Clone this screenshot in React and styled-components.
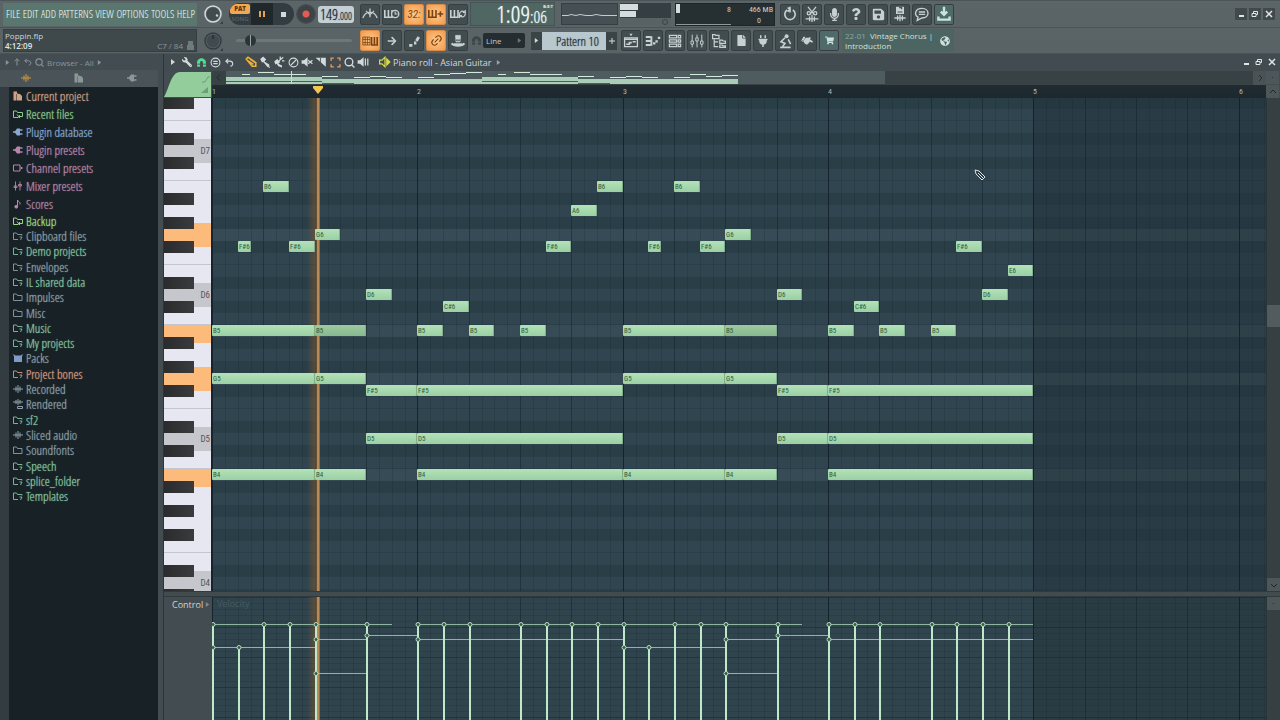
import React from 'react';
import styled, { createGlobalStyle } from 'styled-components';
import {
  FaSave, FaQuestion, FaMicrophone, FaArrowRight, FaShoppingCart, FaGlobeAmericas, FaWrench,
  FaMagnet, FaFile, FaHandPointRight, FaPlug,
} from 'react-icons/fa';
import { Link2 } from 'lucide-react';

const narrow = '"Open Sans Condensed Light", "Open Sans Condensed", "Roboto Condensed", sans-serif';
const compact = '"Roboto Condensed", Roboto, sans-serif';
const human = '"Open Sans", Lato, sans-serif';

const Global = createGlobalStyle`
  *, *::before, *::after { box-sizing: border-box; }
  body { margin: 0; background: #434c50; overflow: hidden; }
  button, select, input { font: inherit; color: inherit; margin: 0; padding: 0; border: 0; background: none; }
  ul { list-style: none; margin: 0; padding: 0; }
  svg { display: block; flex: none; }
`;

const Page = styled.div`
  display: flex;
  flex-direction: column;
  height: 100vh;
  color: #cdd5d8;
  font-family: ${human};
  font-size: 9px;
`;

/* ---------- header ---------- */
const Header = styled.header`
  background: linear-gradient(#5b6568, #596366);
  border-top: 1px solid #4b5558;
`;
const HeaderRow = styled.div`
  display: flex;
  align-items: center;
  height: ${p => p.$h}px;
  padding: 0 5px 0 3px;
  border-bottom: 1px solid #4a5457;
`;
const Menu = styled.nav`
  display: flex;
  justify-content: space-between;
  align-items: center;
  width: 194px;
  height: 23px;
  padding: 0 2px 2px 3px;
  background: #5a776f;
  font-family: ${narrow};
  font-size: 11px;
  color: #f4fbf7;
  text-shadow: 0 0 1px #e6f2ec;
`;
const Info = styled.div`
  display: flex;
  flex-direction: column;
  justify-content: center;
  width: 194px;
  height: 23px;
  padding: 0 2px 0 1px;
  background: #3f494c;
  border: 1px solid #353e41;
  font-size: 8px;
  line-height: 10px;
  span { display: flex; }
  em { margin-left: auto; padding-right: 4px; font-style: normal; color: #8b979b; }
  b { font-weight: 600; color: #e3e9eb; }
`;
const KnobCell = styled.div`
  display: flex;
  justify-content: center;
  width: 26px;
  margin-left: 3px;
`;
const Transport = styled.div`
  display: flex;
  width: 65px;
  height: 22px;
  margin-left: 3px;
  border-radius: 11px;
  overflow: hidden;
  background: #333c40;
`;
const ModeButton = styled.button`
  display: flex;
  flex-direction: column;
  width: 22px;
  font-size: 6px;
  font-weight: 600;
  line-height: 10px;
  text-align: center;
  color: #59646a;
  b { margin: 1px 1px 0; background: #f2a850; color: #5c340c; border-radius: 6px 2px 2px 2px; }
`;
const PlayButton = styled.button`
  display: grid;
  place-items: center;
  flex: 1;
  background: ${p => (p.$dark ? '#20282b' : 'transparent')};
`;
const RecButton = styled.button`
  width: 18px;
  height: 18px;
  margin-left: 3px;
  border-radius: 50%;
  background: radial-gradient(circle, #e65a55 0 3px, #3c4245 4px);
  box-shadow: 0 0 0 1px #444e51;
`;
const Tempo = styled.div`
  width: 36px;
  height: 17px;
  margin-left: 3px;
  border-radius: 3px;
  background: #c3cfd4;
  color: #1d262d;
  font-family: ${narrow};
  font-size: 15px;
  line-height: 16px;
  text-align: center;
  text-shadow: 0 0 1px #3a464e;
  small { font-size: 10px; }
`;
const Group = styled.div`
  display: flex;
  gap: 2px;
  margin-left: ${p => p.$ml}px;
`;
const Tool = styled.button`
  display: grid;
  place-items: center;
  width: 20px;
  height: 21px;
  border-radius: 2px;
  border: 1px solid ${p => (p.$on ? '#d98d48' : '#353f43')};
  background: ${p => (p.$on ? 'radial-gradient(#ffc98a, #f29a4c)' : p.$teal ? '#4f6a68' : '#424d50')};
  color: ${p => (p.$on ? '#7a4212' : p.$teal ? '#c8e4dc' : '#c8d0d3')};
  font-family: ${compact};
  font-size: 11px;
  font-style: italic;
`;
const Clock = styled.div`
  display: flex;
  align-items: flex-end;
  justify-content: flex-end;
  width: 85px;
  height: 24px;
  margin-left: 2px;
  padding-right: 1px;
  background: #4f6663;
  border: 1px solid #455557;
  color: #eef7f5;
  font-family: ${narrow};
  font-size: 24px;
  line-height: 23px;
  text-shadow: 0 0 1px #dcebe8;
`;
const ClockTail = styled.span`
  display: flex;
  flex-direction: column;
  width: 23px;
  small { font-size: 17px; line-height: 16px; }
  abbr { font: 700 4px/5px Roboto, sans-serif; text-align: right; text-shadow: none; }
`;
const Scope = styled.div`
  width: 57px;
  height: 22px;
  margin-left: 6px;
  background: #465054;
  border: 1px solid #353e42;
`;
const Peaks = styled.div`
  width: 51px;
  height: 22px;
  margin-left: 2px;
  background: linear-gradient(#353e42 0 15px, #586265 15px);
`;
const Cpu = styled.div`
  display: grid;
  grid-template-columns: 55px 1fr;
  grid-template-rows: 11px 10px;
  width: 100px;
  height: 23px;
  margin-left: 4px;
  padding-right: 1px;
  background: #263033;
  border: 1px solid #1d2528;
  color: #c9d2d4;
  font-family: ${compact};
  font-size: 8px;
  line-height: 11px;
  text-align: right;
  span:first-child { border-left: 4px solid #d5dcde; height: 9px; }
  span:nth-child(3) { border-bottom: 1px solid #8d989b; height: 10px; }
  span:nth-child(4) { padding-right: 12px; }
`;
const Spacer = styled.div`flex: 1;`;
const Gap = styled.div`width: ${p => p.$w}px;`;
const WinButton = styled.button`
  display: grid;
  place-items: center;
  width: ${p => p.$w || 12}px;
  height: 12px;
  background: ${p => (p.$flat ? 'none' : '#41494d')};
  color: #dfe5e7;
`;
const PitchSlider = styled.input`
  appearance: none;
  width: 116px;
  height: 3px;
  margin-left: 10px;
  background: #6d777a;
  border-radius: 2px;
  &::-webkit-slider-thumb {
    appearance: none;
    width: 11px;
    height: 11px;
    border-radius: 50%;
    background: linear-gradient(90deg, #2c3437 0 5px, #9aa4a7 5px 6px, #2c3437 6px);
  }
`;
const SnapBox = styled.label`
  display: grid;
  grid-template-columns: 42px;
  align-items: center;
  height: 15px;
  margin-left: 2px;
  background: #262d30;
  color: #c3cbcd;
  border-radius: 2px;
  font-size: 8px;
  & > * { grid-area: 1 / 1; }
  & > svg { justify-self: end; margin-right: 3px; color: #6c7579; pointer-events: none; }
`;
const Snap = styled.select`
  appearance: none;
  padding-left: 3px;
`;
const SnapIcon = styled.span`
  margin-left: 4px;
  color: #3c4548;
`;
const Pattern = styled.div`
  display: flex;
  align-items: center;
  height: 18px;
  margin-left: 6px;
`;
const PatternStep = styled.button`
  display: grid;
  place-items: center;
  width: 11px;
  height: 18px;
  background: #3a4447;
  color: #d3dadc;
`;
const PatternName = styled.button`
  width: 64px;
  height: 18px;
  padding-right: 7px;
  background: #b9c8cf;
  color: #1f2b33;
  font-family: ${narrow};
  font-size: 13px;
  line-height: 16px;
  text-align: right;
  text-shadow: 0 0 1px #36424a;
`;
const News = styled.a`
  display: flex;
  align-items: center;
  justify-content: space-between;
  width: 112px;
  height: 23px;
  margin-left: 3px;
  padding: 0 4px 0 3px;
  background: #4c6563;
  color: #cfe0dd;
  font-size: 8px;
  line-height: 10px;
  text-decoration: none;
  em { padding-right: 2px; font-style: normal; color: #8ea6a4; }
`;

/* ---------- body ---------- */
const Body = styled.div`
  display: flex;
  flex: 1;
  min-height: 0;
`;
const Sidebar = styled.aside`
  display: flex;
  flex-direction: column;
  width: 158px;
  background: #333c40;
`;
const SideTitle = styled.div`
  display: flex;
  align-items: center;
  gap: 3px;
  height: 16px;
  padding-left: 5px;
  background: #434c50;
  color: #8a9599;
  font-size: 8px;
`;
const SideTabs = styled.div`
  display: flex;
  height: 17px;
  padding-bottom: 2px;
  background: #4a5458;
`;
const SideTab = styled.button`
  flex: 1;
  display: grid;
  place-items: center;
  color: ${p => (p.$on ? '#c9963e' : '#8c979a')};
`;
const Tree = styled.nav`
  flex: 1;
  margin-left: 9px;
  background: #182226;
  font-family: ${narrow};
  font-size: 13px;
  line-height: 14px;
`;
const TreeList = styled.ul`
  display: grid;
  grid-auto-rows: 1fr;
  height: ${p => p.$h}px;
`;
const TreeItem = styled.li`
  display: flex;
  align-items: center;
  gap: 3px;
  padding-left: 4px;
  color: ${p => p.$c};
  a { color: inherit; text-decoration: none; text-shadow: 0 0 1px currentColor; }
`;
const Divider = styled.div`
  width: 6px;
  background: #434c50;
  border-right: 1px solid #2c3538;
`;
const Roll = styled.main`
  display: flex;
  flex-direction: column;
  flex: 1;
  min-width: 0;
  background: #434c50;
`;
const RollTitle = styled.div`
  display: flex;
  align-items: center;
  height: 17px;
  padding: 0 0 1px 2px;
  background: #424b4f;
  color: #d3dadc;
`;
const RollTool = styled.button`
  display: grid;
  place-items: center;
  width: 14px;
  height: 14px;
  color: ${p => p.$c || '#d3dadc'};
`;
const RollName = styled.span`margin-left: 1px;`;
const Split = styled.div`
  display: grid;
  grid-template-columns: 48px minmax(0, 1fr) 14px;
  flex: ${p => p.$flex};
  min-height: 0;
`;
const Corner = styled.div`
  grid-row: span 2;
`;
const MiniRow = styled.div`
  position: relative;
  height: 14px;
  overflow: hidden;
  background: #384144;
`;
const MiniMore = styled.button`
  position: absolute;
  top: 0;
  right: 0;
  width: 13px;
  height: 14px;
  background: #4a5255;
  color: #262c2f;
  display: grid;
  place-items: center;
`;
const Ruler = styled.div`
  position: relative;
  height: 13px;
  overflow: hidden;
  background: linear-gradient(#202c32, #1c282e);
  color: #a9b6ba;
  font-family: ${compact};
  font-size: 8px;
  line-height: 13px;
`;
const RulerMark = styled.span`
  position: absolute;
`;
const Marker = styled.svg`
  position: absolute;
  top: 1px;
`;
const ScrollCell = styled.div`
  display: flex;
  flex-direction: column;
  background: #363f42;
  border-left: 1px solid #2b3538;
  justify-content: space-between;
`;
const ScrollButton = styled.button`
  display: grid;
  place-items: center;
  width: 13px;
  height: 13px;
  background: #4d5659;
  color: #20272a;
`;
const ScrollThumb = styled.div`
  height: 22px;
  margin-bottom: 44px;
  background: #525c5f;
`;
const Keyboard = styled.div`
  overflow: hidden;
  border-right: 1px solid #1a2327;
`;
const Key = styled.div`
  display: flex;
  align-items: center;
  justify-content: flex-end;
  height: 12px;
  padding-right: 1px;
  color: #50565c;
  font-family: ${compact};
  font-size: 9px;
  line-height: 12px;
  background: ${p => p.$fill};
  border-bottom: ${p => (p.$edge ? '1px solid #c3c7d1' : '0')};
  &:first-child { height: 11px; }
`;
const Canvas = styled.div`
  position: relative;
  overflow: hidden;
  background: #2d414b;
`;
const Band = styled.div`
  height: 12px;
  background: ${p => p.$c};
  border-bottom: ${p => (p.$edge ? '1px solid #2a3e48' : '0')};
  &:first-child { height: 11px; }
`;
const Fill = styled.svg`
  position: absolute;
  inset: 0;
  width: 100%;
  height: 100%;
`;
const Note = styled.div`
  position: absolute;
  height: 11px;
  padding-left: 1px;
  border-radius: 1px;
  background: ${p => (p.$dim ? 'linear-gradient(#9ccaa1, #88b88f)' : 'linear-gradient(#b2e2b8, #9ccfa4)')};
  box-shadow: inset -1px 0 #7fb089;
  color: #2f5a3a;
  font-family: ${compact};
  font-size: 7px;
  line-height: 12px;
`;
const Playhead = styled.div`
  position: absolute;
  top: 0;
  bottom: 0;
  width: 13px;
  background: linear-gradient(90deg, transparent, rgba(128, 88, 46, .65) 10px, #b98a55 10px 12px, #7f6e58 12px);
`;
const CursorIcon = styled.svg`
  position: absolute;
`;
const Splitter = styled.div`
  height: 6px;
  background: #424b4e;
  border-top: 1px solid #30393c;
  border-bottom: 1px solid #30393c;
`;
const ControlLabel = styled.div`
  display: flex;
  align-items: center;
  gap: 2px;
  height: 14px;
  padding-left: 8px;
  color: #cdd5d8;
  svg { color: #7f8a8e; }
`;
const ControlName = styled.div`
  position: absolute;
  left: 5px;
  top: 1px;
  color: #485b64;
  line-height: 12px;
`;

/* ---------- musical data ---------- */
const BAR = 616 / 3;
const xOf = step => Math.round((step * BAR) / 16);
const NAMES = ['C', 'C#', 'D', 'D#', 'E', 'F', 'F#', 'G', 'G#', 'A', 'A#', 'B'];
const nameOf = p => NAMES[p % 12] + Math.floor(p / 12);
const isBlack = p => [1, 3, 6, 8, 10].includes(p % 12);
const TOP = 90;
const pitches = Array.from({ length: 60 }, (_, i) => TOP - i);
const ACTIVE = [79, 71, 67, 59];
const pitchOf = s => NAMES.indexOf(s.slice(0, -1)) + 12 * Number(s.slice(-1));

const melody = [
  ['F#6', 2, 1], ['B6', 4, 2], ['F#6', 6, 2], ['G6', 8, 2], ['D6', 12, 2], ['B5', 16, 2], ['C#6', 18, 2],
  ['B5', 20, 2], ['B5', 24, 2], ['F#6', 26, 2], ['A6', 28, 2], ['B6', 30, 2],
  ['F#6', 34, 1], ['B6', 36, 2], ['F#6', 38, 2], ['G6', 40, 2], ['D6', 44, 2], ['B5', 48, 2], ['C#6', 50, 2],
  ['B5', 52, 2], ['B5', 56, 2], ['F#6', 58, 2], ['D6', 60, 2], ['E6', 62, 2],
];
const chords = [0, 32].flatMap(o => [
  ['B5', o, 8], ['B5', o + 8, 4, true], ['G5', o, 8], ['G5', o + 8, 4], ['B4', o, 8], ['B4', o + 8, 4],
  ['F#5', o + 12, 4], ['D5', o + 12, 4], ['F#5', o + 16, 16], ['D5', o + 16, 16], ['B4', o + 16, 16],
]);
const notes = [...chords, ...melody];

const holds = [
  [0, 14, 27], [16, 46, 27], [48, 64, 27],
  ...[0, 32].flatMap(o => [[o, o + 8, 50], [o + 8, o + 12, 42], [o + 8, o + 12, 76], [o + 12, o + 16, 38], [o + 16, o + 32, 42]]),
];
const stems = [0, 4, 6, 8, 12, 16, 18, 20, 24, 26, 28, 30, 32, 36, 38, 40, 44, 48, 50, 52, 56, 58, 60, 62];
const knobs = [
  ...stems.map(s => [s, 27]),
  ...[0, 32].flatMap(o => [[o, 50], [o + 2, 50], [o + 8, 42], [o + 8, 76], [o + 12, 38], [o + 16, 42]]),
];

/* ---------- drawings ---------- */
const I = ({ children, s = 16, w = 2, vb = 20 }) => (
  <svg width={s} height={s} viewBox={`0 0 ${vb} ${vb}`} fill="none" stroke="currentColor" strokeWidth={w}>{children}</svg>
);
const keysPath = <path d="M1 5v9h9V5M5.500 5v9" strokeWidth="2" />;
const icons = {
  metro: <I><path d="M1 15c2-5 5-7 8-7h2c3 0 6 2 8 7M10 3v11" strokeWidth="1.600" /><path d="M5 6l5 5 5-5" strokeWidth="1.400" /></I>,
  wait: <I>{keysPath}<circle cx="14" cy="10" r="4.500" fill="#424d50" strokeWidth="1.600" /><path d="M14 7v3h3" strokeWidth="1.400" /></I>,
  blend: <I>{keysPath}<path d="M12 10h7M15.500 6.500v7" /></I>,
  loop: <I>{keysPath}<path d="M12 12c-1-6 5-7 6-4M19 8c1 6-5 7-6 4M16 8h3V5M15 12h-3v3" strokeWidth="1.500" /></I>,
  typing: <I w="1.500"><path d="M1 5h9v10H1zM1 8h9M1 12h9M4 5v10M7 5v10" strokeWidth="1" /><path d="M12 5v10h7V5M15.500 5v10" strokeWidth="2" /></I>,
  slide: <I><path d="M4 15.500h4M10 12.500h3M13 10l3-5" strokeWidth="3.500" /></I>,
  hat: <I><path d="M7 3h6l-.5 8h-5z" fill="currentColor" strokeWidth="1" /><path d="M2 13c3 4 13 4 16 0M5 14h10" strokeWidth="2.500" /><path d="M7 9h6" stroke="#6a7578" /></I>,
  undo: <I><path d="M6.500 5a6.500 6.500 0 1 0 7 0M10 1v7M10 4L7 2M10 4l-3 3" /></I>,
  cut: <I w="1.600"><path d="M5 1l8 10M15 1L7 11M2 16h16M7 13v6M10 11v9M13 13v6" /><circle cx="6" cy="9" r="2" /><circle cx="14" cy="9" r="2" /></I>,
  saveNew: <I><path d="M5 1h10v9H5z" fill="currentColor" stroke="none" /><path d="M7 7.500h6M9 2h3v2" stroke="#424d50" strokeWidth="1.500" /><path d="M3 15h14M7 12v6M10 11v8M13 12v6" strokeWidth="1.600" /></I>,
  chat: <I w="1.700"><path d="M10 3c10 0 10 12 0 12L4 18l1-4C0 11 1 3 10 3zM6 7.500h8M6 10.500h8" /></I>,
  dl: <I w="3"><path d="M10 1v8M6 7l4 4 4-4" /><path d="M3 13v4h14v-4" /></I>,
  playlist: <I><path d="M2 8h16v9H2zM2 8V6h16v2" strokeWidth="1.600" /><path d="M8 1h4l-2 3z" fill="currentColor" stroke="none" /><path d="M4 14h4v-2h3M12 11h4" /></I>,
  roll: <I><path d="M1 5h6M1 10h6M1 15h6M8 4v12" strokeWidth="2.400" /><path d="M10 13h3M13 10.500h3M16 6h3" strokeWidth="2.800" /></I>,
  rack: <I w="1.500"><path d="M3 3h9v3H3zM3 8.500h9v3H3zM3 14h9v3H3zM14 3h3v3h-3zM14 8.500h3v3h-3zM14 14h3v3h-3z" /></I>,
  mixer: <I w="1.200"><path d="M4 2v16M10 2v16M16 2v16" /><path d="M2.500 10h3v4h-3zM8.500 6h3v4h-3zM14.500 10h3v4h-3z" fill="#424d50" /></I>,
  browser: <I w="1.500"><path d="M2 2h3l1 1h4v4H2zM4 8v9h5M4 11h5M11 9h3l1 1h3v3h-7zM11 15h3l1 1h3v2h-7z" /></I>,
  person: <I><circle cx="12" cy="4" r="2.500" fill="currentColor" stroke="none" /><path d="M10 6L5 11l5 2-3 4M4 18h13M14 8l3 6" strokeWidth="2" /></I>,
  folder: <I s={10} w="1.800"><path d="M1 4h6l2 3h9v10H1z" /></I>,
  folderPlus: <I s={10} w="1.800"><path d="M18 9V7H9L7 4H1v13h9" /><path d="M13 12h5l-3 6" /></I>,
  recent: <I s={10} w="2"><path d="M11 17H1V4h6l2 3h10v7" /><path d="M8 11l3 4h8v-5M11 15l3-3M11 15l3 3" strokeWidth="2" /></I>,
  wave: <I s={10} w="2"><path d="M0 10h20M6 5v10M10 2v16M14 5v10" /></I>,
  rendered: <I s={10} w="2"><path d="M0 6h20M6 2v8M10 0v12M14 2v8M9 15h10v4H9z" /></I>,
  doc: <I s={10}><path d="M1 1h7v4h3v1H7v13H1z" fill="currentColor" stroke="none" /><path d="M8 6h6l4 4v9H8z" fill="currentColor" stroke="none" /></I>,
  plug: <I s={10} w="3"><path d="M0 10h5M19 6h-6M19 14h-6" /><path d="M3 10l5-7h6v14H8z" fill="currentColor" stroke="none" /></I>,
  channel: <I s={10}><path d="M1 4h13v12H1zM15 8l4 2-4 2" /></I>,
  mix: <I s={10} w="1.800"><path d="M5 1v18M14 1v18M2 10h6v3H2zM11 7h6v3h-6z" /></I>,
  score: <I s={10}><path d="M9 15V2c1 4 7 4 5 9" /><circle cx="6.500" cy="15.500" r="2.800" fill="currentColor" /></I>,
  packs: <I s={10}><path d="M0 2l5 3h10l5-3-2 5v11H2V7z" fill="#7f9cc8" stroke="none" /></I>,
};
const Tri = ({ s = 6 }) => <svg width={s} height={s} viewBox="0 0 6 6" fill="currentColor"><path d="M1 0l4 3-4 3z" /></svg>;
const MinI = () => <svg width="8" height="8" viewBox="0 0 8 8" fill="currentColor"><path d="M2 5h5v2H2z" /></svg>;
const RestI = () => <svg width="8" height="8" viewBox="0 0 8 8" fill="none" stroke="currentColor"><path d="M1 3.500h4v3H1zM2.500 3V1.500h4v3H5" /></svg>;
const CloseI = () => <svg width="8" height="8" viewBox="0 0 8 8" stroke="currentColor" strokeWidth="1.500"><path d="M1 1l6 6M7 1L1 7" /></svg>;
const Chevron = ({ d }) => <svg width="8" height="8" viewBox="0 0 8 8" fill="none" stroke="currentColor"><path d={d} /></svg>;
const Knob = ({ lit }) => (
  <svg width="22" height="22" viewBox="0 0 22 22" fill="none">
    <circle cx="11" cy="11" r="8" stroke={lit ? '#d5dcde' : '#343d40'} strokeWidth="1.500" />
    <circle cx="11" cy="11" r="6.500" fill="#414b4f" />
    {lit ? <path d="M14 12l2 1" stroke="#c9d2d4" strokeWidth="2" /> : <path d="M11 5v4" stroke="#262e31" strokeWidth="1.500" />}
    <path d="M21 18v3h-3z" fill="#353e41" />
  </svg>
);

const topTools = [
  ['Metronome', icons.metro], ['Wait for input', icons.wait], ['Countdown', '32:', 1],
  ['Blend recording', icons.blend, 1], ['Loop recording', icons.loop],
];
const lowTools = [
  ['Typing keyboard', icons.typing, 1], ['Step', <FaArrowRight size={10} />], ['Slide', icons.slide],
  ['Link', <Link2 size={13} style={{ rotate: '-45deg' }} />, 1], ['Hat', icons.hat],
];
const fileTools = [
  ['Undo', icons.undo], ['Cut', icons.cut], ['Record audio', <FaMicrophone size={13} />], ['Help', <FaQuestion size={12} />],
  ['Save', <FaSave size={13} />], ['Save new version', icons.saveNew], ['Messages', icons.chat], ['Download', icons.dl, 0, 1],
];
const viewTools = [
  ['Playlist', icons.playlist], ['Piano roll', icons.roll], ['Channel rack', icons.rack], ['Mixer', icons.mixer], ['Browser', icons.browser],
  ['Project', <FaFile size={11} />], ['Plugins', <FaPlug size={12} />], ['Tempo tap', icons.person],
  ['Touch', <FaHandPointRight size={11} style={{ rotate: '30deg' }} />], ['Shop', <FaShoppingCart size={9} />, 0, 1],
];
const ToolSet = ({ items, ml }) => (
  <Group $ml={ml}>
    {items.map(([n, ic, on, teal]) => <Tool key={n} aria-label={n} $on={on} $teal={teal}>{ic}</Tool>)}
  </Group>
);

const C = { or: '#d0a084', gr: '#8fcb8a', bl: '#86a8d2', pk: '#b885ac', gy: '#8c9fa9', te: '#84c4a0', bk: '#9bda7e', rd: '#d69a80' };
const mainTree = [
  ['Current project', 'or', 'doc'], ['Recent files', 'gr', 'recent'], ['Plugin database', 'bl', 'plug'], ['Plugin presets', 'pk', 'plug'],
  ['Channel presets', 'pk', 'channel'], ['Mixer presets', 'pk', 'mix'], ['Scores', 'pk', 'score'],
];
const folderTree = [
  ['Backup', 'bk', 'recent'], ['Clipboard files', 'gy', 'folderPlus'], ['Demo projects', 'te', 'folderPlus'], ['Envelopes', 'gy', 'folderPlus'],
  ['IL shared data', 'te', 'folderPlus'], ['Impulses', 'gy', 'folder'], ['Misc', 'gy', 'folder'], ['Music', 'te', 'folderPlus'],
  ['My projects', 'te', 'folderPlus'], ['Packs', 'gy', 'packs'], ['Project bones', 'rd', 'folderPlus'], ['Recorded', 'gy', 'wave'],
  ['Rendered', 'gy', 'rendered'], ['sf2', 'te', 'folderPlus'], ['Sliced audio', 'gy', 'wave'], ['Soundfonts', 'gy', 'folder'],
  ['Speech', 'te', 'folderPlus'], ['splice_folder', 'te', 'folderPlus'], ['Templates', 'te', 'folderPlus'],
];
const Branch = ({ rows, h }) => (
  <TreeList $h={h}>
    {rows.map(([t, c, ic]) => <TreeItem key={t} $c={C[c]}>{icons[ic]}<a href={`#${t}`}>{t}</a></TreeItem>)}
  </TreeList>
);

const keyTone = p => (ACTIVE.includes(p) ? '#fdbb7b' : p % 12 === 2 ? '#c6c7cd' : '#e6e7f1');
const keyFill = p => {
  if (!isBlack(p)) return keyTone(p);
  return `linear-gradient(90deg, #2a2b2c, #3a3b3d 30px, transparent 30px), linear-gradient(${keyTone(p + 1)} 50%, ${keyTone(p - 1)} 50%)`;
};
const bandTone = p => (ACTIVE.includes(p) ? '#364b55' : isBlack(p) ? '#2a3e48' : '#30454f');

const gridLines = Array.from({ length: 16 * 16 }, (_, i) => i);
const GridLines = () => (
  <Fill shapeRendering="crispEdges">
    <rect x={xOf(64)} width="100%" height="100%" fill="#18282c" opacity=".28" />
    {gridLines.map(i => (
      <line key={i} x1={xOf(i) + 0.5} x2={xOf(i) + 0.5} y1="0" y2="100%" stroke="#101e26"
        opacity={i % 16 === 0 ? 0.8 : i % 4 === 0 ? 0.45 : 0.16} />
    ))}
  </Fill>
);

const Mini = () => (
  <svg width="680" height="14" shapeRendering="crispEdges">
    <rect x="14" y="0" width="659" height="13" fill="#4e5b5f" />
    {notes.map(([n, s, l], i) => {
      const y = 11 - Math.round(((pitchOf(n) - 59) * 10) / 24);
      return <rect key={i} x={14 + s * 8} y={y} width={l * 8} height={i < chords.length ? 2 : 1} fill={l > 2 ? '#a9cdb6' : '#d0eddb'} />;
    })}
    <rect x="79" y="0" width="1" height="13" fill="#d8f05a" />
    <path d="M8 3.500L5 6.500l3 3" fill="none" stroke="#1f272a" shapeRendering="auto" />
  </svg>
);

export default function App() {
  return (
    <Page>
      <Global />
      <Header>
        <HeaderRow $h={27}>
          <Menu>{['FILE', 'EDIT', 'ADD', 'PATTERNS', 'VIEW', 'OPTIONS', 'TOOLS', 'HELP'].map(m => <button key={m}>{m}</button>)}</Menu>
          <KnobCell><Knob lit /></KnobCell>
          <Transport>
            <ModeButton><b>PAT</b>SONG</ModeButton>
            <PlayButton $dark aria-label="Pause"><svg width="6" height="6"><path d="M0 0h2v6H0zM4 0h2v6H4z" fill="#e8a14e" /></svg></PlayButton>
            <PlayButton aria-label="Stop"><svg width="5" height="5"><path d="M0 0h5v5H0z" fill="#d3dadc" /></svg></PlayButton>
          </Transport>
          <RecButton aria-label="Record" />
          <Tempo>149<small>.000</small></Tempo>
          <ToolSet items={topTools} ml={6} />
          <Clock>1:09<ClockTail><abbr>B:S:T</abbr><small>:06</small></ClockTail></Clock>
          <Scope><svg width="55" height="20" fill="none" stroke="#c3cccf"><path d="M0 11.500h6l3-1 5 1 4-1 6 1h6l4-1 6 1h16" /></svg></Scope>
          <Peaks><svg width="51" height="22"><path d="M0 1h18v6H0zM0 8h16v6H0z" fill="#d5dcde" /><circle cx="45" cy="19" r="2.500" fill="none" stroke="#3a4447" /></svg></Peaks>
          <Cpu><span>8</span><span>466 MB</span><span /><span>0</span></Cpu>
          <ToolSet items={fileTools} ml={5} />
          <Spacer />
          <Group $ml={0}>
            <WinButton aria-label="Minimize"><MinI /></WinButton>
            <WinButton aria-label="Restore"><RestI /></WinButton>
            <WinButton aria-label="Close"><CloseI /></WinButton>
          </Group>
        </HeaderRow>
        <HeaderRow $h={26}>
          <Info>
            <span>Poppin.flp</span>
            <span><b>4:12:09</b><em>C7 / 84</em><svg width="7" height="9"><path d="M1 0h5v4h1v5H0V4h1z" fill="#6f7a7e" /></svg></span>
          </Info>
          <KnobCell><Knob /></KnobCell>
          <PitchSlider type="range" aria-label="Pitch" defaultValue="9" />
          <ToolSet items={lowTools} ml={8} />
          <SnapIcon><FaMagnet size={9} style={{ rotate: '180deg' }} /></SnapIcon>
          <SnapBox><Snap aria-label="Snap"><option>Line</option></Snap><Tri s={5} /></SnapBox>
          <Pattern>
            <PatternStep aria-label="Select pattern"><Tri s={5} /></PatternStep>
            <PatternName>Pattern 10</PatternName>
            <PatternStep aria-label="Add pattern"><Chevron d="M1 4h6M4 1v6" /></PatternStep>
          </Pattern>
          <ToolSet items={viewTools} ml={4} />
          <News href="#news"><span><em>22-01</em> Vintage Chorus |<br />Introduction</span><FaGlobeAmericas size={10} /></News>
        </HeaderRow>
      </Header>

      <Body>
        <Sidebar>
          <SideTitle><Tri s={5} />
            <I s={8} w="2.500"><path d="M10 19V2M4 8l6-6 6 6" /></I>
            <I s={8} w="2.500"><path d="M7 2L2 7l5 5M2 7h9c8 0 8 11 1 11" /></I>
            <I s={9} w="2.500"><circle cx="9" cy="9" r="7" /><path d="M14 14l5 5" /></I>
            Browser - All <Tri s={5} />
          </SideTitle>
          <SideTabs>
            <SideTab $on aria-label="All">{icons.wave}</SideTab>
            <SideTab aria-label="Project">{icons.doc}</SideTab>
            <SideTab aria-label="Plugins">{icons.plug}</SideTab>
          </SideTabs>
          <Tree><Branch rows={mainTree} h={126} /><Branch rows={folderTree} h={291} /></Tree>
        </Sidebar>
        <Divider />

        <Roll>
          <RollTitle>
            <RollTool aria-label="Options"><Tri /></RollTool>
            <RollTool aria-label="Tools"><FaWrench size={10} style={{ scale: '-1 1' }} /></RollTool>
            <RollTool aria-label="Magnet" $c="#52dc90"><FaMagnet size={9} style={{ rotate: '180deg' }} /></RollTool>
            <RollTool aria-label="Stamp"><I s={11}><circle cx="10" cy="10" r="8" /><path d="M6 8h8M6 12h8" /></I></RollTool>
            <RollTool aria-label="Undo"><I s={9} w="2.500"><path d="M7 2L2 7l5 5M2 7h9c8 0 8 11 1 11" /></I></RollTool>
            <Gap $w={8} />
            <RollTool aria-label="Draw" $c="#f0b23c"><I s={12} w="2.500"><path d="M2 5l3-3 13 9v6h-6zM5 8l9 6M8 5l9 6" /></I></RollTool>
            <RollTool aria-label="Paint"><I s={12}><path d="M2 5l5-4 5 5-3 3 8 5v3l-3 1-7-8-2 1z" fill="currentColor" stroke="none" /><path d="M13 16l5 3" /></I></RollTool>
            <RollTool aria-label="Paint drums"><I s={12}><path d="M2 9l5-4 5 5-3 3 6 3v3l-6-2-3-4-2 1z" fill="currentColor" stroke="none" /><path d="M10 8l7-6M15 8h4M12 1v4" /></I></RollTool>
            <RollTool aria-label="Delete"><I s={11}><circle cx="10" cy="10" r="8" /><path d="M5 15L15 5" /></I></RollTool>
            <RollTool aria-label="Mute"><I s={12}><path d="M1 7h4l6-5v16l-6-5H1z" fill="currentColor" stroke="none" /><path d="M12 7l7 6M19 7l-7 6" /></I></RollTool>
            <RollTool aria-label="Slice"><I s={12}><path d="M1 3h17v15z" fill="currentColor" stroke="none" /><path d="M9 3v8" stroke="#424b4f" strokeWidth="1.500" /></I></RollTool>
            <RollTool aria-label="Select" $c="#e89a5c"><I s={11} w="2.500"><path d="M7 2H2v5M13 2h5v5M7 18H2v-5M13 18h5v-5" /></I></RollTool>
            <RollTool aria-label="Zoom"><I s={11} w="2.500"><circle cx="9" cy="9" r="7" /><path d="M14 14l5 5" /></I></RollTool>
            <RollTool aria-label="Playback"><I s={12}><path d="M1 7h4l6-5v16l-6-5H1z" fill="currentColor" stroke="none" /><path d="M14 4v12M18 4v12" /></I></RollTool>
            <Gap $w={8} />
            <RollTool aria-label="Channel" $c="#d5da4c"><I s={12}><path d="M1 7h4l5-5v16l-5-5H1z" /><path d="M13 5l5 5-5 5z" fill="currentColor" /></I></RollTool>
            <RollName>Piano roll - Asian Guitar</RollName>
            <RollTool aria-label="Channel menu" $c="#9aa4a7"><Tri s={5} /></RollTool>
            <Spacer />
            <WinButton $flat $w={13} aria-label="Minimize editor"><MinI /></WinButton>
            <WinButton $flat $w={13} aria-label="Restore editor"><RestI /></WinButton>
            <WinButton $flat $w={13} aria-label="Close editor"><CloseI /></WinButton>
            <Gap $w={2} />
          </RollTitle>

          <Split $flex="none">
            <Corner>
              <svg width="47" height="27" viewBox="0 0 47 27">
                <path d="M0 26C5 18 7 1 16 1h31v25z" fill="#93cd9c" />
                <path d="M38 11h3l3-5h2" fill="none" stroke="#6f9d78" />
                <path d="M37 22h7v-6z" fill="#6f9d78" />
              </svg>
            </Corner>
            <MiniRow><Mini /><MiniMore aria-label="Scroll right"><Chevron d="M3 1l3 3-3 3" /></MiniMore></MiniRow>
            <ScrollButton aria-label="Zoom">·</ScrollButton>
            <Ruler>
              {Array.from({ length: 6 }, (_, i) => <RulerMark key={i} style={{ left: xOf(i * 16) }}>{i + 1}</RulerMark>)}
              <Marker width="10" height="8" viewBox="0 0 10 8" style={{ left: 101 }}><path d="M0 0h10v2L5 8 0 2z" fill="#f3c650" /></Marker>
            </Ruler>
            <ScrollButton aria-label="Scroll up"><Chevron d="M1 5l3-3 3 3" /></ScrollButton>
          </Split>

          <Split $flex="493 1 0">
            <Keyboard>
              {pitches.map(p => <Key key={p} $fill={keyFill(p)} $edge={p % 12 === 0 || p % 12 === 5}>{p % 12 === 2 ? nameOf(p) : ''}</Key>)}
            </Keyboard>
            <Canvas>
              {pitches.map(p => <Band key={p} $c={bandTone(p)} $edge={p % 12 === 0 || p % 12 === 5} />)}
              <GridLines />
              <Playhead style={{ left: 95 }} />
              {notes.map(([n, s, l, dim], i) => (
                <Note key={i} $dim={dim} style={{ left: xOf(s), width: xOf(s + l) - xOf(s), top: (TOP - pitchOf(n)) * 12 - 1 }}>{n}</Note>
              ))}
              <CursorIcon width="12" height="12" viewBox="0 0 12 12" style={{ left: 762, top: 71 }}>
                <path d="M1 1l4 1 6 6-3 3-6-6zM4 4l5 5M6 3l4 4" fill="#2a3a44" stroke="#dbe3e6" />
              </CursorIcon>
            </Canvas>
            <ScrollCell>
              <span />
              <ScrollThumb />
              <ScrollButton aria-label="Scroll down"><Chevron d="M1 3l3 3 3-3" /></ScrollButton>
            </ScrollCell>
          </Split>
          <Splitter />
          <Split $flex="123 1 0">
            <ControlLabel>Control <Tri s={5} /></ControlLabel>
            <Canvas>
              <Fill>
                <defs>
                  <pattern id="levels" width="8" height="30" patternUnits="userSpaceOnUse">
                    <path d="M0 .5h8" stroke="#22343c" />
                    <path d="M0 6.500h8M0 12.500h8M0 18.500h8M0 24.500h8" stroke="#2a3e47" />
                  </pattern>
                </defs>
                <rect width="100%" height="100%" fill="#30444e" />
                <rect width="100%" height="100%" fill="url(#levels)" />
              </Fill>
              <GridLines />
              <ControlName>Velocity</ControlName>
              <Playhead style={{ left: 95 }} />
              <Fill>
                {holds.map(([a, b, y], i) => <line key={i} x1={xOf(a)} x2={xOf(b)} y1={y + 0.5} y2={y + 0.5} stroke="#8db59f" />)}
                {stems.map(s => <line key={s} x1={xOf(s) + 1} x2={xOf(s) + 1} y1="28" y2="100%" stroke="#bfeac9" strokeWidth="2" />)}
                {[2, 34].map(s => <line key={s} x1={xOf(s) + 1} x2={xOf(s) + 1} y1="51" y2="100%" stroke="#bfeac9" strokeWidth="2" />)}
                {knobs.map(([s, y], i) => <circle key={i} cx={xOf(s) + 1} cy={y + 0.5} r="2" fill="#3c5a4c" stroke="#b4e0bf" />)}
              </Fill>
            </Canvas>
            <ScrollCell><ScrollButton aria-label="Control zoom">·</ScrollButton></ScrollCell>
          </Split>
        </Roll>
      </Body>
    </Page>
  );
}
